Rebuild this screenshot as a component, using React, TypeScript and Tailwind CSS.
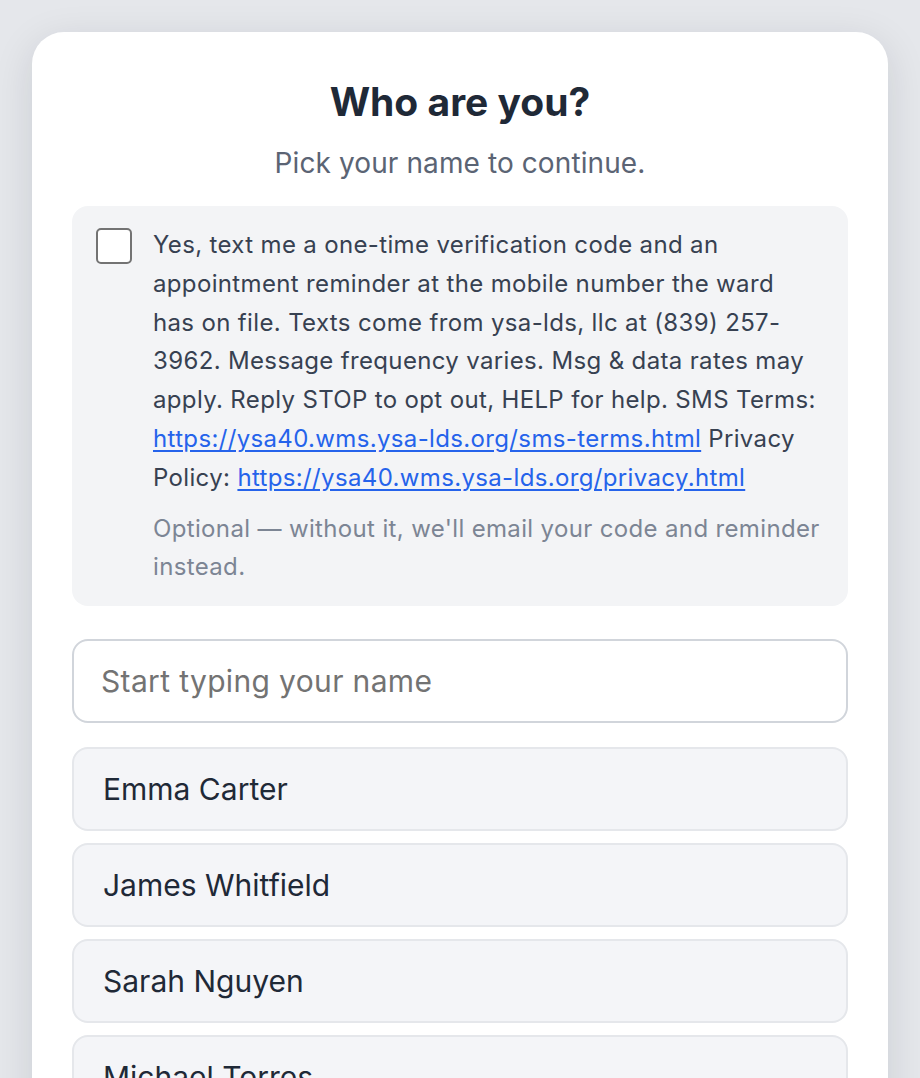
import React from "react";

const names = ["Emma Carter", "James Whitfield", "Sarah Nguyen", "Michael Torres", "Olivia Bennett"];

export default function App() {
  return (
    <div className="min-h-screen bg-[#e5e7eb] px-8 pt-8 overflow-hidden" style={{ fontFamily: "Inter, 'Noto Sans', sans-serif" }}>
      <div className="bg-white rounded-[32px] shadow-[0_10px_40px_rgba(15,23,42,0.12)] px-10 pt-10 pb-10 h-[1100px]">
        <h1 className="text-center text-[39px] leading-[48px] font-bold text-[#1f2937] tracking-[0px] mt-[6px]">Who are you?</h1>
        <p className="text-center text-[28px] leading-[36px] text-[#5b6474] mt-[19px] tracking-[0.1px]">Pick your name to continue.</p>
        <div className="mt-[25px] bg-[#f3f4f6] rounded-[16px] pl-6 pr-6 pt-5 pb-[19px] flex gap-[21px]">
          <div className="w-9 h-9 shrink-0 rounded-[5px] border-2 border-[#737373] bg-white mt-[2px]" />
          <div className="flex-1">
            <p className="text-[24px] leading-[38.8px] text-[#374151] tracking-[0.35px]">
              Yes, text me a one-time verification code and an appointment reminder at the mobile number the ward has{"\u00a0"}on file. Texts come from ysa-lds, llc at (839) 257-<wbr />3962. Message frequency varies. Msg &amp; data rates may apply. Reply STOP to opt out, HELP for help. SMS Terms:{" "}
              <a className="text-[#2563eb] underline underline-offset-[3px] whitespace-nowrap">https://ysa40.wms.ysa-lds.org/sms-terms.html</a> Privacy Policy:{" "}
              <a className="text-[#2563eb] underline underline-offset-[3px] whitespace-nowrap">https://ysa40.wms.ysa-lds.org/privacy.html</a>
            </p>
            <p className="mt-[12px] text-[24px] leading-[38.8px] text-[#7c8594] tracking-[0.35px]">Optional — without it, we'll email your code and reminder instead.</p>
          </div>
        </div>
        <div className="mt-[33px] h-[84px] rounded-[16px] border-2 border-[#d1d5db] bg-white flex items-center px-[27px]">
          <span className="text-[30px] text-[#737373] tracking-[0.35px]">Start typing your name</span>
        </div>
        <div className="mt-6 flex flex-col gap-3">
          {names.map((n) => (
            <div key={n} className="h-[84px] rounded-[16px] border-2 border-[#e5e7eb] bg-[#f4f5f8] flex items-center px-[29px]">
              <span className="text-[30px] text-[#1f2937]">{n}</span>
            </div>
          ))}
        </div>
      </div>
    </div>
  );
}
